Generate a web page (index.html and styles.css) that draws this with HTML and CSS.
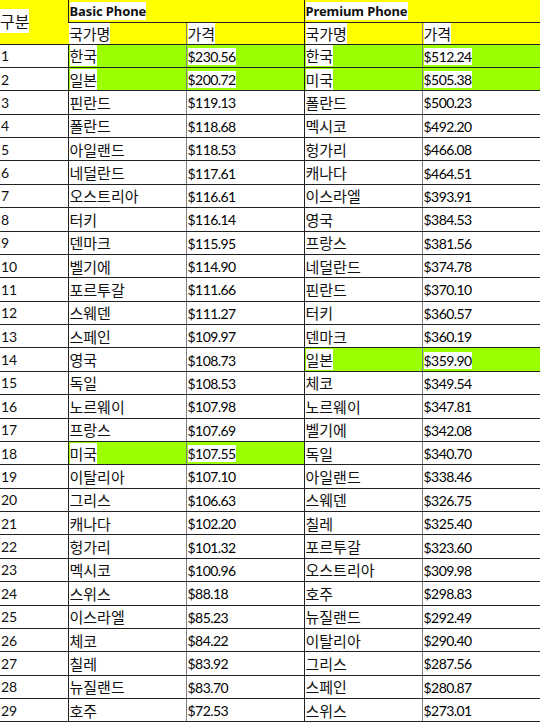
FILE: index.html
```html
<!DOCTYPE html>
<html lang="ko">
<head>
<meta charset="utf-8">
<link rel="stylesheet" href="styles.css">
</head>
<body>
<table class="sheet">
  <colgroup>
    <col class="c-no"><col class="c-w"><col class="c-w"><col class="c-w"><col class="c-w">
  </colgroup>
  <thead>
    <tr class="h1">
      <th rowspan="2" class="yel corner"><span>구분</span></th>
      <th colspan="2" class="yel group"><span>Basic Phone</span></th>
      <th colspan="2" class="yel group"><span>Premium Phone</span></th>
    </tr>
    <tr class="h2">
      <th class="yel name"><span>국가명</span></th>
      <th class="yel price"><span>가격</span></th>
      <th class="yel name"><span>국가명</span></th>
      <th class="yel price"><span>가격</span></th>
    </tr>
  </thead>
  <tbody id="rows"></tbody>
</table>
<script>
const data = [
["한국","$230.56","한국","$512.24"],
["일본","$200.72","미국","$505.38"],
["핀란드","$119.13","폴란드","$500.23"],
["폴란드","$118.68","멕시코","$492.20"],
["아일랜드","$118.53","헝가리","$466.08"],
["네덜란드","$117.61","캐나다","$464.51"],
["오스트리아","$116.61","이스라엘","$393.91"],
["터키","$116.14","영국","$384.53"],
["덴마크","$115.95","프랑스","$381.56"],
["벨기에","$114.90","네덜란드","$374.78"],
["포르투갈","$111.66","핀란드","$370.10"],
["스웨덴","$111.27","터키","$360.57"],
["스페인","$109.97","덴마크","$360.19"],
["영국","$108.73","일본","$359.90"],
["독일","$108.53","체코","$349.54"],
["노르웨이","$107.98","노르웨이","$347.81"],
["프랑스","$107.69","벨기에","$342.08"],
["미국","$107.55","독일","$340.70"],
["이탈리아","$107.10","아일랜드","$338.46"],
["그리스","$106.63","스웨덴","$326.75"],
["캐나다","$102.20","칠레","$325.40"],
["헝가리","$101.32","포르투갈","$323.60"],
["멕시코","$100.96","오스트리아","$309.98"],
["스위스","$88.18","호주","$298.83"],
["이스라엘","$85.23","뉴질랜드","$292.49"],
["체코","$84.22","이탈리아","$290.40"],
["칠레","$83.92","그리스","$287.56"],
["뉴질랜드","$83.70","스페인","$280.87"],
["호주","$72.53","스위스","$273.01"]
];
const greenBasic = [1,2,18], greenPrem = [1,2,14];
const tb = document.getElementById('rows');
data.forEach((r,i)=>{
  const n=i+1;
  const gb = greenBasic.includes(n) ? ' grn' : '';
  const gp = greenPrem.includes(n) ? ' grn' : '';
  const tr=document.createElement('tr');
  tr.innerHTML = `<td class="no">${n}</td>`+
    `<td class="name${gb}"><span>${r[0]}</span></td>`+
    `<td class="price${gb}"><span>${r[1]}</span></td>`+
    `<td class="name${gp}"><span>${r[2]}</span></td>`+
    `<td class="price${gp}"><span>${r[3]}</span></td>`;
  tb.appendChild(tr);
});
</script>
</body>
</html>
```

FILE: styles.css
```css
html, body {
  margin: 0;
  padding: 0;
  background: #fff;
}

.sheet {
  border-collapse: collapse;
  table-layout: fixed;
  width: 540px;
  font-family: "Noto Sans CJK KR", "Noto Sans", sans-serif;
  color: #111;
}

.c-no { width: 68px; }
.c-w { width: 118px; }

.sheet th, .sheet td {
  padding: 0 0 0 1px;
  text-align: left;
  vertical-align: middle;
  white-space: nowrap;
  overflow: hidden;
  border-bottom: 1px solid #222;
  border-left: 1px solid #222;
  font-weight: normal;
  font-size: 15px;
  line-height: 17px;
}

.sheet th:first-child, .sheet td:first-child {
  border-left: none;
}

.sheet td.price, .sheet th.price {
  border-left: 1px solid #808080;
}

.h1 { height: 22px; }
.h2 { height: 22px; }
tbody tr { height: 23.38px; }

.yel { background: #ffff00; }
.grn { background: #9cff00; }

.yel span, .grn span {
  background: #fff;
}

.sheet th.corner {
  font-size: 16px;
  padding-left: 0;
}

.group span {
  font-family: "Noto Sans", sans-serif;
  font-weight: bold;
  font-size: 13px;
  letter-spacing: -0.1px;
}

.sheet td.no {
  font-family: "Lato", "Noto Sans", sans-serif;
  font-size: 14px;
  padding-left: 1px;
}

.sheet td.price span {
  font-family: "Lato", "Noto Sans", sans-serif;
  font-size: 14px;
  letter-spacing: -0.55px;
  color: #000;
}

.sheet td.name span, .sheet th.name span, .sheet th.price span {
  font-family: "Noto Sans CJK KR", sans-serif;
  font-size: 15px;
}
```
